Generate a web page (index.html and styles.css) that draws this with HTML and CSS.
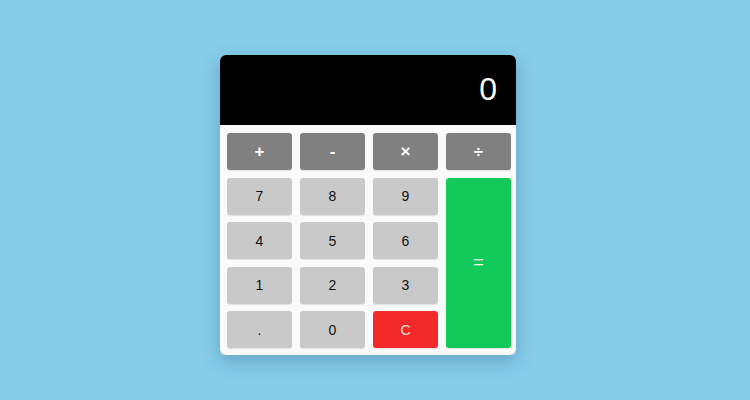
FILE: index.html
```html
<!DOCTYPE html>
<html lang="en">
<head>
    <meta charset="UTF-8">
    <meta name="viewport" content="width=device-width, initial-scale=1.0">
    <title>Calculator</title>
    <link rel="stylesheet" href="styles.css">
</head>
<body>

<!-- Calculator -->
<div class="calculator">
    <div class="display" id="display">0</div>
    <div class="keys">
        <button class="key operator">+</button>
        <button class="key operator">-</button>
        <button class="key operator">×</button>
        <button class="key operator">÷</button>

        <button class="key">7</button>
        <button class="key">8</button>
        <button class="key">9</button>
        <button class="key equals">=</button>

        <button class="key">4</button>
        <button class="key">5</button>
        <button class="key">6</button>

        <button class="key">1</button>
        <button class="key">2</button>
        <button class="key">3</button>

        <button class="key">.</button>
        <button class="key">0</button>
        <button class="key clear">C</button>
    </div>
</div>

</body>
</html>
```
FILE: styles.css
```css
body {
    font-family: "Liberation Sans", Arial, sans-serif;
    margin: 0;
    padding: 0;
    background-color: #86cdea;
    height: 400px;
    display: flex;
    justify-content: center;
    align-items: flex-start;
}
.calculator {
    width: 296px;
    margin-top: 55px;
    margin-left: -14px;
    background-color: #fafafa;
    border-radius: 6px;
    overflow: hidden;
    box-shadow: 0 6px 18px rgba(40, 90, 120, 0.35);
}
.display {
    background-color: #000;
    color: #fff;
    height: 70px;
    font-size: 32px;
    text-align: right;
    padding: 0 19px;
    line-height: 68px;
    box-sizing: border-box;
}
.keys {
    display: grid;
    grid-template-columns: repeat(4, 65px);
    grid-auto-rows: 37px;
    column-gap: 8px;
    row-gap: 7.5px;
    padding: 8px 6px 7px 7px;
}
.key {
    border: none;
    border-radius: 3px;
    background-color: #c9c9c9;
    color: #111;
    font-family: inherit;
    font-size: 14px;
    padding: 0;
    box-shadow: 0 1px 1px rgba(0, 0, 0, 0.1);
}
.operator {
    background-color: #808080;
    color: #fff;
    font-size: 17px;
    font-weight: bold;
}
.equals {
    grid-column: 4;
    grid-row: 2 / span 4;
    background-color: #12ca5a;
    color: #fff;
    font-size: 18px;
}
.clear {
    background-color: #f42a2a;
    color: #ffe0d0;
}
```
